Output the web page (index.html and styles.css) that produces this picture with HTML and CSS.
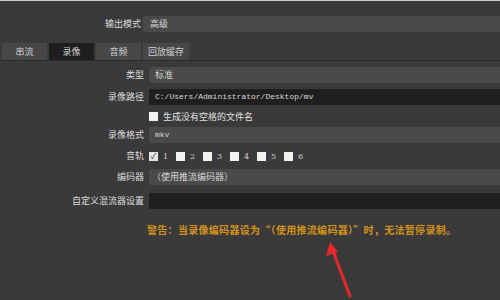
FILE: index.html
```html
<!DOCTYPE html>
<html lang="zh-CN">
<head>
    <meta charset="UTF-8">
    <title>输出设置</title>
    <link rel="stylesheet" href="styles.css">
</head>
<body>
    <div class="window">
        <div class="modeRow">
            <span class="label">输出模式</span>
            <div class="field">高级</div>
        </div>

        <div class="tabs">
            <div class="tab">串流</div>
            <div class="tab active">录像</div>
            <div class="tab">音频</div>
            <div class="tab">回放缓存</div>
        </div>

        <div class="panel">
            <div class="form">
                <span class="label">类型</span>
                <div class="field">标准</div>

                <span class="label">录像路径</span>
                <div class="field dark mono">C:/Users/Administrator/Desktop/mv</div>

                <span></span>
                <label class="check"><span class="box"></span>生成没有空格的文件名</label>

                <span class="label">录像格式</span>
                <div class="field mono">mkv</div>

                <span class="label">音轨</span>
                <div class="tracks">
                    <label class="check"><span class="box checked">&#10003;</span><span class="num">1</span></label>
                    <label class="check"><span class="box"></span><span class="num">2</span></label>
                    <label class="check"><span class="box"></span><span class="num">3</span></label>
                    <label class="check"><span class="box"></span><span class="num">4</span></label>
                    <label class="check"><span class="box"></span><span class="num">5</span></label>
                    <label class="check"><span class="box"></span><span class="num">6</span></label>
                </div>

                <span class="label">编码器</span>
                <div class="field encoder">（使用推流编码器）</div>

                <span class="label spaced">自定义混流器设置</span>
                <div class="field dark spaced"></div>
            </div>

            <p class="warning">警告：当录像编码器设为“（使用推流编码器）”时，无法暂停录制。</p>
        </div>

        <!-- annotation arrow -->
        <svg class="arrow" width="500" height="300" viewBox="0 0 500 300">
            <path d="M350 296 L333 251" stroke="#e8262b" stroke-width="3" stroke-linecap="round" fill="none"/>
            <path d="M330 242 L326 256 L338 252 Z" fill="#e8262b"/>
        </svg>
    </div>
</body>
</html>
```

FILE: styles.css
```css
body {
  margin: 0;
  background: #3a3a3a;
  color: #d8d8d8;
  font: 9px "Noto Sans CJK SC", "Noto Sans", sans-serif;
}

.window {
  position: relative;
  width: 500px;
  height: 300px;
  border-top: 1px solid #cfcfcf;
  box-sizing: border-box;
  overflow: hidden;
}

.label {
  text-align: right;
  line-height: 16px;
  color: #dcdcdc;
}

.field {
  height: 16px;
  line-height: 16px;
  background: #4a4a4a;
  padding-left: 7px;
  border-radius: 2px 0 0 2px;
  white-space: nowrap;
}

.field.dark {
  background: #1f1f1f;
}

.mono {
  font-family: "Liberation Mono", monospace;
  font-size: 8px;
}

/* output mode */
.modeRow {
  display: grid;
  grid-template-columns: 141px 1fr;
  column-gap: 2px;
  margin-top: 15px;
}

/* tabs */
.tabs {
  display: flex;
  gap: 2px;
  margin: 11px 0 0 2px;
}

.tab {
  width: 45px;
  height: 17px;
  line-height: 17px;
  text-align: center;
  background: #474747;
  color: #d0d0d0;
}

.tab:last-child {
  width: 46px;
}

.tab.active {
  background: #1e1e1e;
}

/* panel */
.panel {
  border-top: 1px solid #2c2c2c;
  padding-top: 6px;
}

.form {
  display: grid;
  grid-template-columns: 144px 1fr;
  column-gap: 5px;
  row-gap: 5px;
  align-items: center;
}

.form .field {
  padding-left: 6px;
}

.dark.mono {
  margin-top: 1px;
}

.check {
  display: flex;
  align-items: center;
  gap: 5px;
  height: 12px;
  color: #e0e0e0;
}

.box {
  width: 9px;
  height: 9px;
  background: #f2f2f2;
  display: inline-flex;
  align-items: center;
  justify-content: center;
  color: #3a3a3a;
  font-size: 9px;
  line-height: 1;
}

.box.checked {
  background: #e6e6e6;
  color: #2a2a2a;
  font-size: 8px;
}

.tracks {
  display: flex;
  gap: 5px;
}

.num {
  font-family: "DejaVu Serif", serif;
  font-size: 8px;
  color: #cfcfcf;
  width: 8px;
}

.encoder {
  color: #d6d6d6;
  padding-left: 3px !important;
}

.spaced {
  margin-top: 3px;
}

.warning {
  margin: 13px 0 0 147px;
  font-size: 10px;
  font-weight: bold;
  letter-spacing: 0.3px;
  color: #d4921a;
  white-space: nowrap;
}

.arrow {
  position: absolute;
  left: 0;
  top: -1px;
  pointer-events: none;
}
```
